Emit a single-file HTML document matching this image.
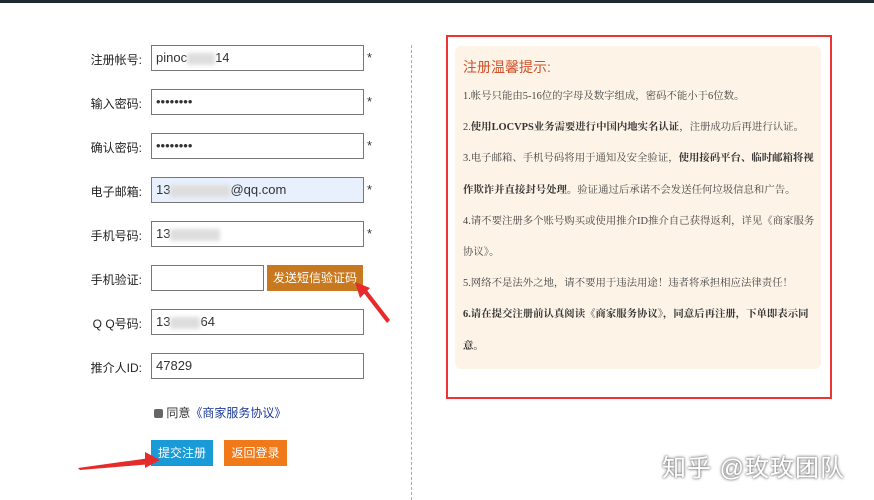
<!DOCTYPE html>
<html><head><meta charset="utf-8"><style>
body{margin:0;width:874px;height:500px;background:#fff;position:relative;overflow:hidden;font-family:"Liberation Sans","Noto Sans CJK SC",sans-serif;}
.top{position:absolute;left:0;top:0;width:874px;height:3px;background:#1e2a33}
.lab{position:absolute;width:92px;left:50px;text-align:right;font-size:12px;color:#222}
.in{position:absolute;left:151px;border:1px solid #777;font-size:13px;color:#333;line-height:23px;padding-left:4px;box-sizing:border-box;width:213px;height:26px}
.star{position:absolute;left:367px;font-size:13px;color:#333}
.blur{display:inline-block;width:28px;height:12px;background:#ddd;vertical-align:middle;filter:blur(2px)}
.btn{position:absolute;color:#fff;font-size:12px;text-align:center;line-height:26px}
.box{position:absolute;left:446px;top:35px;width:382px;height:360px;border:2px solid #e33}
.in2{position:absolute;left:7px;top:9px;width:366px;height:323px;background:#fdf4e7;border-radius:6px;padding:11px 6px 12px 8px;box-sizing:border-box;font-family:"Liberation Serif","Noto Serif CJK SC",serif;font-size:10.4px;color:#444}
.in2 h3{margin:0 0 4px;font-size:14px;color:#d0502a;font-weight:normal;font-family:"Liberation Sans","Noto Sans CJK SC",sans-serif}
.in2 p{margin:0;line-height:31.2px}
b{color:#333}
</style></head><body>
<div class="top"></div>
<div class="lab" style="top:51px">注册帐号:</div><div class="in" style="top:45px">pinoc<span class="blur"></span>14</div><div class="star" style="top:50px">*</div>
<div class="lab" style="top:95px">输入密码:</div><div class="in" style="top:89px">••••••••</div><div class="star" style="top:94px">*</div>
<div class="lab" style="top:139px">确认密码:</div><div class="in" style="top:133px">••••••••</div><div class="star" style="top:138px">*</div>
<div class="lab" style="top:183px">电子邮箱:</div><div class="in" style="top:177px;background:#e8f0fe">13<span class="blur" style="width:60px"></span>@qq.com</div><div class="star" style="top:182px">*</div>
<div class="lab" style="top:227px">手机号码:</div><div class="in" style="top:221px">13<span class="blur" style="width:50px"></span></div><div class="star" style="top:226px">*</div>
<div class="lab" style="top:271px">手机验证:</div><div class="in" style="top:265px;width:113px"></div>
<div class="btn" style="left:267px;top:265px;width:96px;background:#c8781e">发送短信验证码</div>
<div class="lab" style="top:315px">Q Q号码:</div><div class="in" style="top:309px">13<span class="blur" style="width:30px"></span>64</div>
<div class="lab" style="top:359px">推介人ID:</div><div class="in" style="top:353px">47829</div>
<div style="position:absolute;left:154px;top:404px;font-size:12px;color:#333"><span style="display:inline-block;width:9px;height:9px;background:#666;border-radius:2px;vertical-align:-1px"></span> 同意<span style="color:#1a3a99">《商家服务协议》</span></div>
<div class="btn" style="left:151px;top:440px;width:62px;background:#1a9ad6">提交注册</div>
<div class="btn" style="left:224px;top:440px;width:63px;background:#f07a1a">返回登录</div>
<div style="position:absolute;left:411px;top:45px;height:455px;border-left:1px dashed #aaa"></div>
<svg style="position:absolute;left:0;top:0" width="874" height="500">
<polygon points="363,292 366,289 390,320 387,323" fill="#e52b2b"/>
<polygon points="355,282 370,288 360,298" fill="#e52b2b"/>
<polygon points="78,468 150,458 152,464 80,470" fill="#e52b2b"/>
<polygon points="145,452 160,460 145,468" fill="#e52b2b"/>
</svg>
<div class="box"><div class="in2">
<h3>注册温馨提示:</h3>
<p>1.帐号只能由5-16位的字母及数字组成，密码不能小于6位数。</p>
<p>2.<b>使用LOCVPS业务需要进行中国内地实名认证</b>，注册成功后再进行认证。</p>
<p>3.电子邮箱、手机号码将用于通知及安全验证，<b>使用接码平台、临时邮箱将视作欺诈并直接封号处理</b>。验证通过后承诺不会发送任何垃圾信息和广告。</p>
<p>4.请不要注册多个账号购买或使用推介ID推介自己获得返利，详见《商家服务协议》。</p>
<p>5.网络不是法外之地，请不要用于违法用途！违者将承担相应法律责任！</p>
<p><b>6.请在提交注册前认真阅读《商家服务协议》，同意后再注册，下单即表示同意。</b></p>
</div></div>
<div style="position:absolute;left:662px;top:448px;font-size:24px;color:#fff;text-shadow:0 0 3px #777,0 0 2px #777;letter-spacing:1px">知乎 @玫玫团队</div>
</body></html>
